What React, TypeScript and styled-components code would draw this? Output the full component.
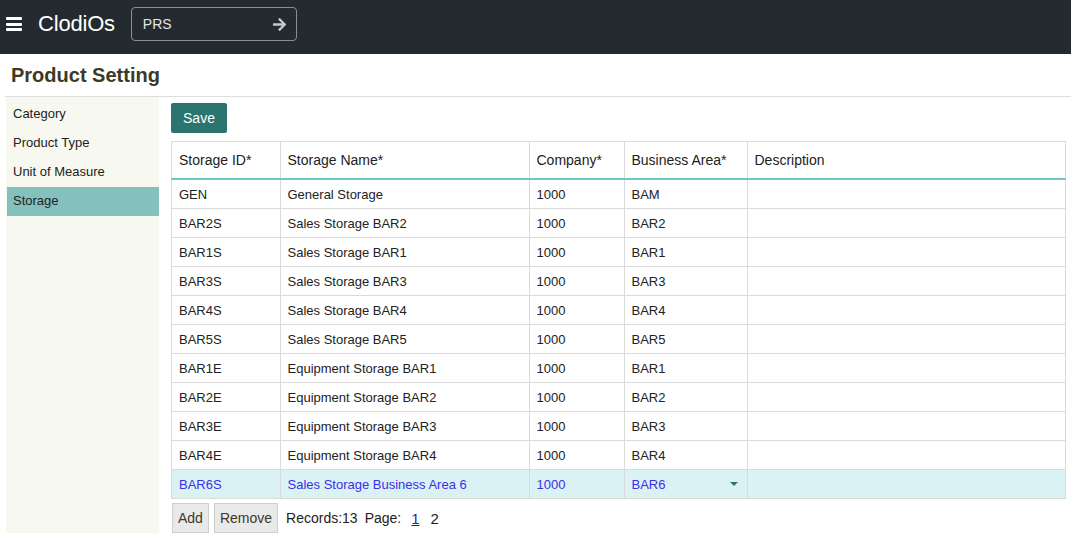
import styled, { createGlobalStyle } from 'styled-components'

const GlobalStyle = createGlobalStyle`
  html, body {
    margin: 0;
    padding: 0;
    background: #fff;
    font-family: "Liberation Sans", Arial, sans-serif;
    font-size: 14px;
    color: #222;
  }
`

type Row = { id: string; name: string; company: string; area: string }

const rows: Row[] = [
  { id: 'GEN', name: 'General Storage', company: '1000', area: 'BAM' },
  { id: 'BAR2S', name: 'Sales Storage BAR2', company: '1000', area: 'BAR2' },
  { id: 'BAR1S', name: 'Sales Storage BAR1', company: '1000', area: 'BAR1' },
  { id: 'BAR3S', name: 'Sales Storage BAR3', company: '1000', area: 'BAR3' },
  { id: 'BAR4S', name: 'Sales Storage BAR4', company: '1000', area: 'BAR4' },
  { id: 'BAR5S', name: 'Sales Storage BAR5', company: '1000', area: 'BAR5' },
  { id: 'BAR1E', name: 'Equipment Storage BAR1', company: '1000', area: 'BAR1' },
  { id: 'BAR2E', name: 'Equipment Storage BAR2', company: '1000', area: 'BAR2' },
  { id: 'BAR3E', name: 'Equipment Storage BAR3', company: '1000', area: 'BAR3' },
  { id: 'BAR4E', name: 'Equipment Storage BAR4', company: '1000', area: 'BAR4' },
  { id: 'BAR6S', name: 'Sales Storage Business Area 6', company: '1000', area: 'BAR6' },
]

const menu = ['Category', 'Product Type', 'Unit of Measure', 'Storage']

export default function App() {
  return (
    <Page>
      <GlobalStyle />
      <TopBar>
        <Burger>
          <span />
          <span />
          <span />
        </Burger>
        <Brand>ClodiOs</Brand>
        <SearchBox>
          <SearchText>PRS</SearchText>
          <svg width="15" height="15" viewBox="0 0 448 512">
            <path
              fill="#c9c9c9"
              d="M190.5 66.9l22.2-22.2c9.4-9.4 24.6-9.4 33.9 0L441 239c9.4 9.4 9.4 24.6 0 33.9L246.6 467.3c-9.4 9.4-24.6 9.4-33.9 0l-22.2-22.2c-9.5-9.5-9.3-25 .4-34.3L311.4 296H24c-13.3 0-24-10.7-24-24v-32c0-13.3 10.7-24 24-24h287.4L190.9 101.2c-9.8-9.3-10-24.8-.4-34.3z"
            />
          </svg>
        </SearchBox>
      </TopBar>

      <TitleBar>
        <Title>Product Setting</Title>
      </TitleBar>

      <Body>
        <Sidebar>
          {menu.map(m => (
            <MenuItem key={m} $active={m === 'Storage'}>{m}</MenuItem>
          ))}
        </Sidebar>

        <Main>
          <SaveButton>Save</SaveButton>
          <Grid>
            <colgroup>
              <col style={{ width: 108.5 }} />
              <col style={{ width: 249 }} />
              <col style={{ width: 95 }} />
              <col style={{ width: 123 }} />
              <col />
            </colgroup>
            <thead>
              <tr>
                <Th>Storage ID*</Th>
                <Th>Storage Name*</Th>
                <Th>Company*</Th>
                <Th>Business Area*</Th>
                <Th>Description</Th>
              </tr>
            </thead>
            <tbody>
              {rows.map((r, i) => {
                const sel = i === rows.length - 1
                return (
                  <Tr key={r.id} $selected={sel}>
                    <Td>{r.id}</Td>
                    <Td>{r.name}</Td>
                    <Td>{r.company}</Td>
                    <Td>
                      <SelectCell>
                        {r.area}
                        {sel && <Caret />}
                      </SelectCell>
                    </Td>
                    <Td></Td>
                  </Tr>
                )
              })}
            </tbody>
          </Grid>
          <Footer>
            <SmallButton>Add</SmallButton>
            <SmallButton>Remove</SmallButton>
            <Records>Records:13</Records>
            <Records>Page:</Records>
            <PageLink href="#">1</PageLink>
            <PageNum>2</PageNum>
          </Footer>
        </Main>
      </Body>
    </Page>
  )
}

const Page = styled.div`
  width: 1071px;
  height: 533px;
  overflow: hidden;
`

const TopBar = styled.div`
  display: flex;
  align-items: center;
  height: 54px;
  padding: 0 0 6px 6px;
  background: #242b30;
  box-sizing: border-box;
`

const Burger = styled.div`
  display: flex;
  flex-direction: column;
  justify-content: space-between;
  width: 16px;
  height: 14px;

  span {
    display: block;
    height: 3px;
    border-radius: 1px;
    background: #fff;
  }
`

const Brand = styled.div`
  margin-left: 16px;
  font-size: 22px;
  color: #fff;
  letter-spacing: -0.2px;
`

const SearchBox = styled.div`
  display: flex;
  align-items: center;
  justify-content: space-between;
  margin-left: 16px;
  width: 166px;
  height: 34px;
  padding: 0 9px 0 11px;
  box-sizing: border-box;
  border: 1px solid #8b9094;
  border-radius: 4px;
`

const SearchText = styled.span`
  font-size: 14px;
  color: #e6e6e6;
`

const TitleBar = styled.div`
  height: 42px;
  margin-left: 5px;
  padding-left: 6px;
  border-bottom: 1px solid #dedede;
  display: flex;
  align-items: center;
`

const Title = styled.h1`
  margin: 0;
  font-size: 20px;
  font-weight: bold;
  color: #3b3a26;
`

const Body = styled.div`
  display: flex;
  height: 436px;
`

const Sidebar = styled.div`
  width: 153px;
  margin-left: 6px;
  padding-top: 3px;
  background: #f7f9f0;
  display: flex;
  flex-direction: column;
`

const MenuItem = styled.div<{ $active?: boolean }>`
  height: 29px;
  line-height: 28px;
  padding-left: 6px;
  margin-left: 1px;
  font-size: 13px;
  color: #222;
  background: ${p => (p.$active ? '#85c1bc' : 'transparent')};
`

const Main = styled.div`
  flex: 1;
  padding: 6px 5px 0 12px;
`

const SaveButton = styled.button`
  width: 56px;
  height: 30px;
  border: none;
  border-radius: 2px;
  background: #2b7570;
  color: #fff;
  font-family: inherit;
  font-size: 14px;
  padding: 0;
`

const Grid = styled.table`
  margin-top: 8px;
  width: 895px;
  border-collapse: collapse;
  table-layout: fixed;
  border: 1px solid #dadada;
`

const Th = styled.th`
  height: 36px;
  padding: 0 7px;
  text-align: left;
  font-weight: normal;
  font-size: 14px;
  color: #222;
  border-left: 1px solid #dadada;
  border-bottom: 2px solid #6ccac5;
`

const Tr = styled.tr<{ $selected?: boolean }>`
  background: ${p => (p.$selected ? '#daf2f3' : '#fff')};
  color: ${p => (p.$selected ? '#3b30e8' : '#222')};
`

const Td = styled.td`
  height: 28px;
  padding: 0 7px;
  font-size: 13px;
  border: 1px solid #dadada;
  white-space: nowrap;
`

const SelectCell = styled.div`
  display: flex;
  align-items: center;
  justify-content: space-between;
`

const Caret = styled.span`
  width: 0;
  height: 0;
  margin-right: 2px;
  border-left: 4px solid transparent;
  border-right: 4px solid transparent;
  border-top: 4px solid #2b7570;
`

const Footer = styled.div`
  display: flex;
  align-items: center;
  margin-top: 4px;
`

const SmallButton = styled.button`
  height: 30px;
  padding: 0 5px;
  margin-right: 4px;
  margin-left: 1px;
  border: 1px solid #cfcfcf;
  background: #e9e9e9;
  color: #3b3a26;
  font-family: inherit;
  font-size: 14px;
`

const Records = styled.span`
  margin-left: 4px;
  font-size: 14px;
  color: #222;
  & + & {
    margin-left: 7px;
  }
`

const PageLink = styled.a`
  margin-left: 10px;
  font-size: 15px;
  color: #1b1bd0;
  text-decoration: underline;
`

const PageNum = styled.span`
  margin-left: 11px;
  font-size: 15px;
  color: #222;
`
